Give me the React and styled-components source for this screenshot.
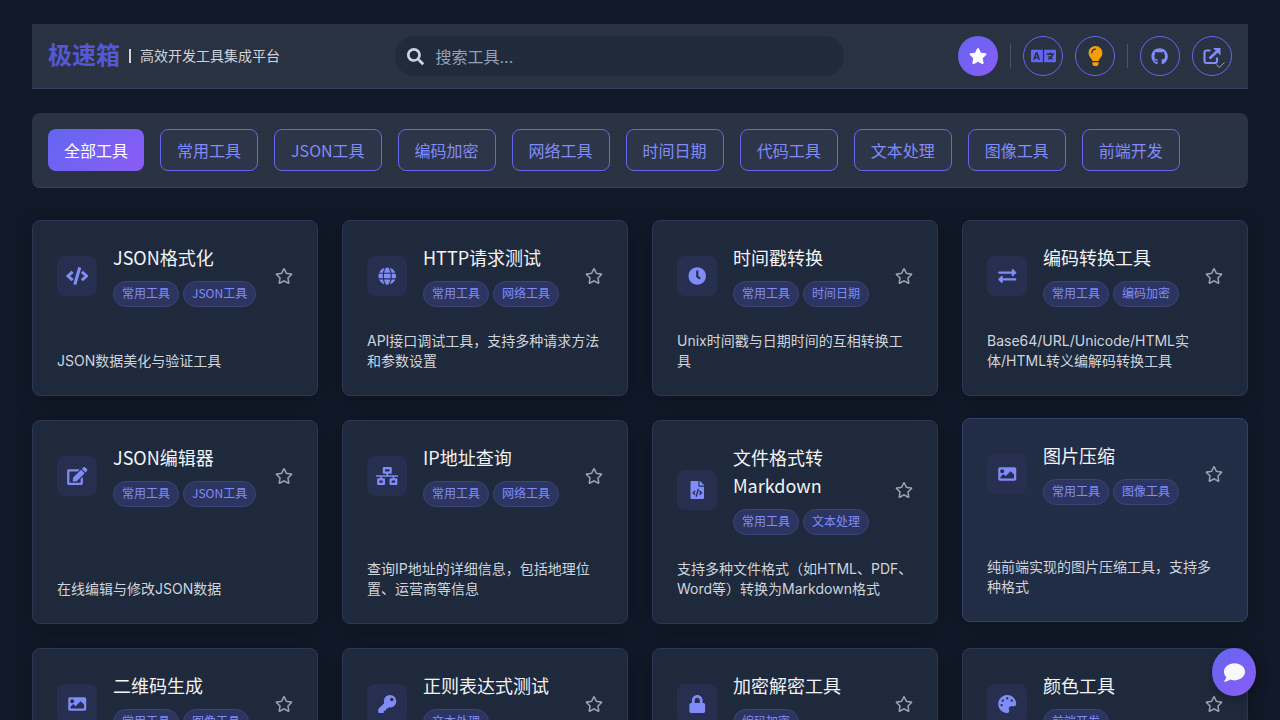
import React from "react";
import styled, { createGlobalStyle } from "styled-components";
import {
  FaCode,
  FaGlobe,
  FaClock,
  FaExchangeAlt,
  FaEdit,
  FaNetworkWired,
  FaFileCode,
  FaImage,
  FaKey,
  FaLock,
  FaPalette,
  FaStar,
  FaRegStar,
  FaLanguage,
  FaLightbulb,
  FaGithub,
  FaSearch,
  FaComment,
} from "react-icons/fa";

const cjk = `"Noto Sans CJK SC", sans-serif`;

const GlobalStyle = createGlobalStyle`
  html, body {
    margin: 0;
    height: 720px;
    overflow: hidden;
    background-color: #111827;
    color: #e5e7eb;
    font-family: Inter, "Noto Sans CJK SC", sans-serif;
  }
  * { box-sizing: border-box; }
`;

const Page = styled.div`
  height: 720px;
  overflow: hidden;
  padding: 24px 32px;
  background-color: #111827;
  &::after {
    content: "";
    position: fixed;
    inset: 0;
    pointer-events: none;
    background-image: radial-gradient(rgba(99, 102, 241, 0.025) 1px, transparent 1px);
    background-size: 4px 4px;
  }
`;

const Header = styled.header`
  height: 65px;
  display: flex;
  align-items: center;
  justify-content: space-between;
  padding: 0 16px;
  background: #293241;
  border-bottom: 1px solid #374263;
`;

const Brand = styled.div`
  display: flex;
  align-items: center;
`;

const Logo = styled.h1`
  margin: 0;
  font-size: 24px;
  line-height: 32px;
  font-weight: 700;
  color: #5558d4;
`;

const Tagline = styled.span`
  margin-left: 9px;
  padding-left: 11px;
  font-size: 14px;
  line-height: 14px;
  color: #d1d5db;
  position: relative;
  &::before {
    content: "";
    position: absolute;
    left: 0;
    top: 0;
    width: 2px;
    height: 14px;
    background: #d1d5db;
  }
`;

const Search = styled.div`
  width: 449px;
  height: 40px;
  display: flex;
  align-items: center;
  gap: 12px;
  padding: 0 12px;
  border-radius: 20px;
  background: #1f2a3a;
  color: #cbd5e1;
  font-size: 16px;
  svg { font-size: 17px; flex: none; }
`;

const Placeholder = styled.span`
  color: #94a3b8;
`;

const Actions = styled.div`
  display: flex;
  align-items: center;
  gap: 12px;
`;

const Divider = styled.span`
  width: 1px;
  height: 24px;
  background: #4b5563;
`;

const RoundButton = styled.button`
  width: 40px;
  height: 40px;
  padding: 0;
  display: flex;
  align-items: center;
  justify-content: center;
  border-radius: 50%;
  border: ${(p) => (p.$active ? "none" : "1px solid #6366f1")};
  background: ${(p) => (p.$active ? "linear-gradient(135deg, #6366f1, #8b5cf6)" : "transparent")};
  color: ${(p) => (p.$active ? "#fff" : p.$color || "#818cf8")};
  position: relative;
  svg {
    height: ${(p) => p.$size || 18}px;
    width: ${(p) => (p.$size || 18) * 1.25}px;
  }
`;

const Check = styled.svg`
  position: absolute;
  right: 6px;
  bottom: 7px;
  && {
    width: 9px;
    height: 6px;
  }
`;

const Filters = styled.nav`
  margin-top: 24px;
  height: 75px;
  display: flex;
  gap: 16px;
  padding: 16px;
  background: #293241;
  border-bottom: 1px solid #374263;
  border-radius: 8px;
`;

const Chip = styled.button`
  height: 42px;
  padding: 0 16px;
  border-radius: 8px;
  font-family: ${cjk};
  font-size: 16px;
  white-space: nowrap;
  border: ${(p) => (p.$active ? "none" : "1px solid #6366f1")};
  background: ${(p) => (p.$active ? "linear-gradient(135deg, #6366f1, #8b5cf6)" : "#2d3548")};
  color: ${(p) => (p.$active ? "#fff" : "#818cf8")};
`;

const Grid = styled.main`
  margin-top: 32px;
  display: grid;
  grid-template-columns: repeat(4, 286px);
  grid-auto-rows: auto;
  gap: 24px;
`;

const Card = styled.article`
  display: flex;
  flex-direction: column;
  justify-content: space-between;
  gap: 24px;
  padding: 24px;
  border-radius: 8px;
  border: 1px solid ${(p) => (p.$hover ? "#343f71" : "#2d3655")};
  background: ${(p) => (p.$hover ? "#212d45" : "#1e293b")};
  box-shadow: 0 4px 20px rgba(0, 0, 0, 0.25);
  transform: ${(p) => (p.$hover ? "translateY(-2px)" : "none")};
`;

const CardHead = styled.div`
  display: flex;
  align-items: center;
  gap: 16px;
`;

const IconBox = styled.div`
  flex: none;
  width: 40px;
  height: 40px;
  display: flex;
  align-items: center;
  justify-content: center;
  border-radius: 8px;
  background: #272f4f;
  color: #818cf8;
  svg {
    height: 18px;
    width: 22.5px;
  }
`;

const CardText = styled.div`
  flex: 1;
  min-width: 0;
`;

const CardTitle = styled.h3`
  margin: -2px 0 10px;
  font-family: ${cjk};
  font-size: 18px;
  line-height: 28px;
  font-weight: 400;
  color: #f3f4f6;
`;

const Tags = styled.div`
  display: flex;
  flex-wrap: wrap;
  gap: 4px;
`;

const Tag = styled.span`
  padding: 3px 8px 5px;
  font-family: ${cjk};
  font-size: 12px;
  line-height: 16px;
  border-radius: 13px;
  background: #2c3560;
  border: 1px solid #3b4474;
  color: #818cf8;
`;

const StarButton = styled.span`
  flex: none;
  display: flex;
  color: #9ca3af;
  font-size: 18px;
`;

const Desc = styled.p`
  margin: 0;
  font-size: 14px;
  line-height: 20px;
  color: #d1d5db;
`;

const ChatButton = styled.button`
  position: fixed;
  left: 1212px;
  top: 648px;
  width: 44px;
  height: 48px;
  padding: 0;
  border: none;
  border-radius: 50%;
  display: flex;
  align-items: center;
  justify-content: center;
  background: linear-gradient(135deg, #6366f1, #8b5cf6);
  color: #f8fafc;
  font-size: 21px;
  box-shadow: 0 4px 12px rgba(0, 0, 0, 0.25);
`;

const categories = ["全部工具", "常用工具", "JSON工具", "编码加密", "网络工具", "时间日期", "代码工具", "文本处理", "图像工具", "前端开发"];

const tools = [
  { icon: FaCode, title: "JSON格式化", tags: ["常用工具", "JSON工具"], desc: "JSON数据美化与验证工具" },
  { icon: FaGlobe, title: "HTTP请求测试", tags: ["常用工具", "网络工具"], desc: "API接口调试工具，支持多种请求方法和参数设置" },
  { icon: FaClock, title: "时间戳转换", tags: ["常用工具", "时间日期"], desc: "Unix时间戳与日期时间的互相转换工具" },
  { icon: FaExchangeAlt, title: "编码转换工具", tags: ["常用工具", "编码加密"], desc: "Base64/URL/Unicode/HTML实体/HTML转义编解码转换工具" },
  { icon: FaEdit, title: "JSON编辑器", tags: ["常用工具", "JSON工具"], desc: "在线编辑与修改JSON数据" },
  { icon: FaNetworkWired, title: "IP地址查询", tags: ["常用工具", "网络工具"], desc: "查询IP地址的详细信息，包括地理位置、运营商等信息" },
  { icon: FaFileCode, title: "文件格式转Markdown", tags: ["常用工具", "文本处理"], desc: "支持多种文件格式（如HTML、PDF、Word等）转换为Markdown格式" },
  { icon: FaImage, title: "图片压缩", tags: ["常用工具", "图像工具"], desc: "纯前端实现的图片压缩工具，支持多种格式", hover: true },
  { icon: FaImage, title: "二维码生成", tags: ["常用工具", "图像工具"], desc: "生成二维码图片" },
  { icon: FaKey, title: "正则表达式测试", tags: ["文本处理"], desc: "正则表达式在线测试" },
  { icon: FaLock, title: "加密解密工具", tags: ["编码加密"], desc: "常用加密解密算法" },
  { icon: FaPalette, title: "颜色工具", tags: ["前端开发"], desc: "颜色选择与格式转换" },
];

function ExternalIcon() {
  return (
    <svg viewBox="0 0 17 16" fill="none" stroke="currentColor">
      <path d="M7 2.5H3A2 2 0 0 0 1 4.5V13A2 2 0 0 0 3 15H11.5A2 2 0 0 0 13.5 13V9.5" strokeWidth="2.2" />
      <path d="M6 10.5L14.5 2.5" strokeWidth="2.6" />
      <path d="M9.5 0H17V7.5Z" fill="currentColor" stroke="none" />
    </svg>
  );
}

export default function App() {
  return (
    <Page>
      <GlobalStyle />
      <Header>
        <Brand>
          <Logo>极速箱</Logo>
          <Tagline>高效开发工具集成平台</Tagline>
        </Brand>
        <Search>
          <FaSearch />
          <Placeholder>搜索工具...</Placeholder>
        </Search>
        <Actions>
          <RoundButton $active $size={16}><FaStar /></RoundButton>
          <Divider />
          <RoundButton $size={20} $color="#6366f1"><FaLanguage /></RoundButton>
          <RoundButton $size={20} $color="#f59e0b"><FaLightbulb /></RoundButton>
          <Divider />
          <RoundButton $size={17}><FaGithub /></RoundButton>
          <RoundButton $size={16}>
            <ExternalIcon />
            <Check viewBox="0 0 9 6"><path d="M0.5 2.5L3 5.5L8.5 0.5" fill="none" stroke="#94a3b8" strokeWidth="1" /></Check>
          </RoundButton>
        </Actions>
      </Header>
      <Filters>
        {categories.map((c, i) => (
          <Chip key={c} $active={i === 0}>{c}</Chip>
        ))}
      </Filters>
      <Grid>
        {tools.map((t) => (
          <Card key={t.title} $hover={t.hover}>
            <CardHead>
              <IconBox><t.icon /></IconBox>
              <CardText>
                <CardTitle>{t.title}</CardTitle>
                <Tags>
                  {t.tags.map((g) => <Tag key={g}>{g}</Tag>)}
                </Tags>
              </CardText>
              <StarButton><FaRegStar /></StarButton>
            </CardHead>
            <Desc>{t.desc}</Desc>
          </Card>
        ))}
      </Grid>
      <ChatButton><FaComment /></ChatButton>
    </Page>
  );
}
